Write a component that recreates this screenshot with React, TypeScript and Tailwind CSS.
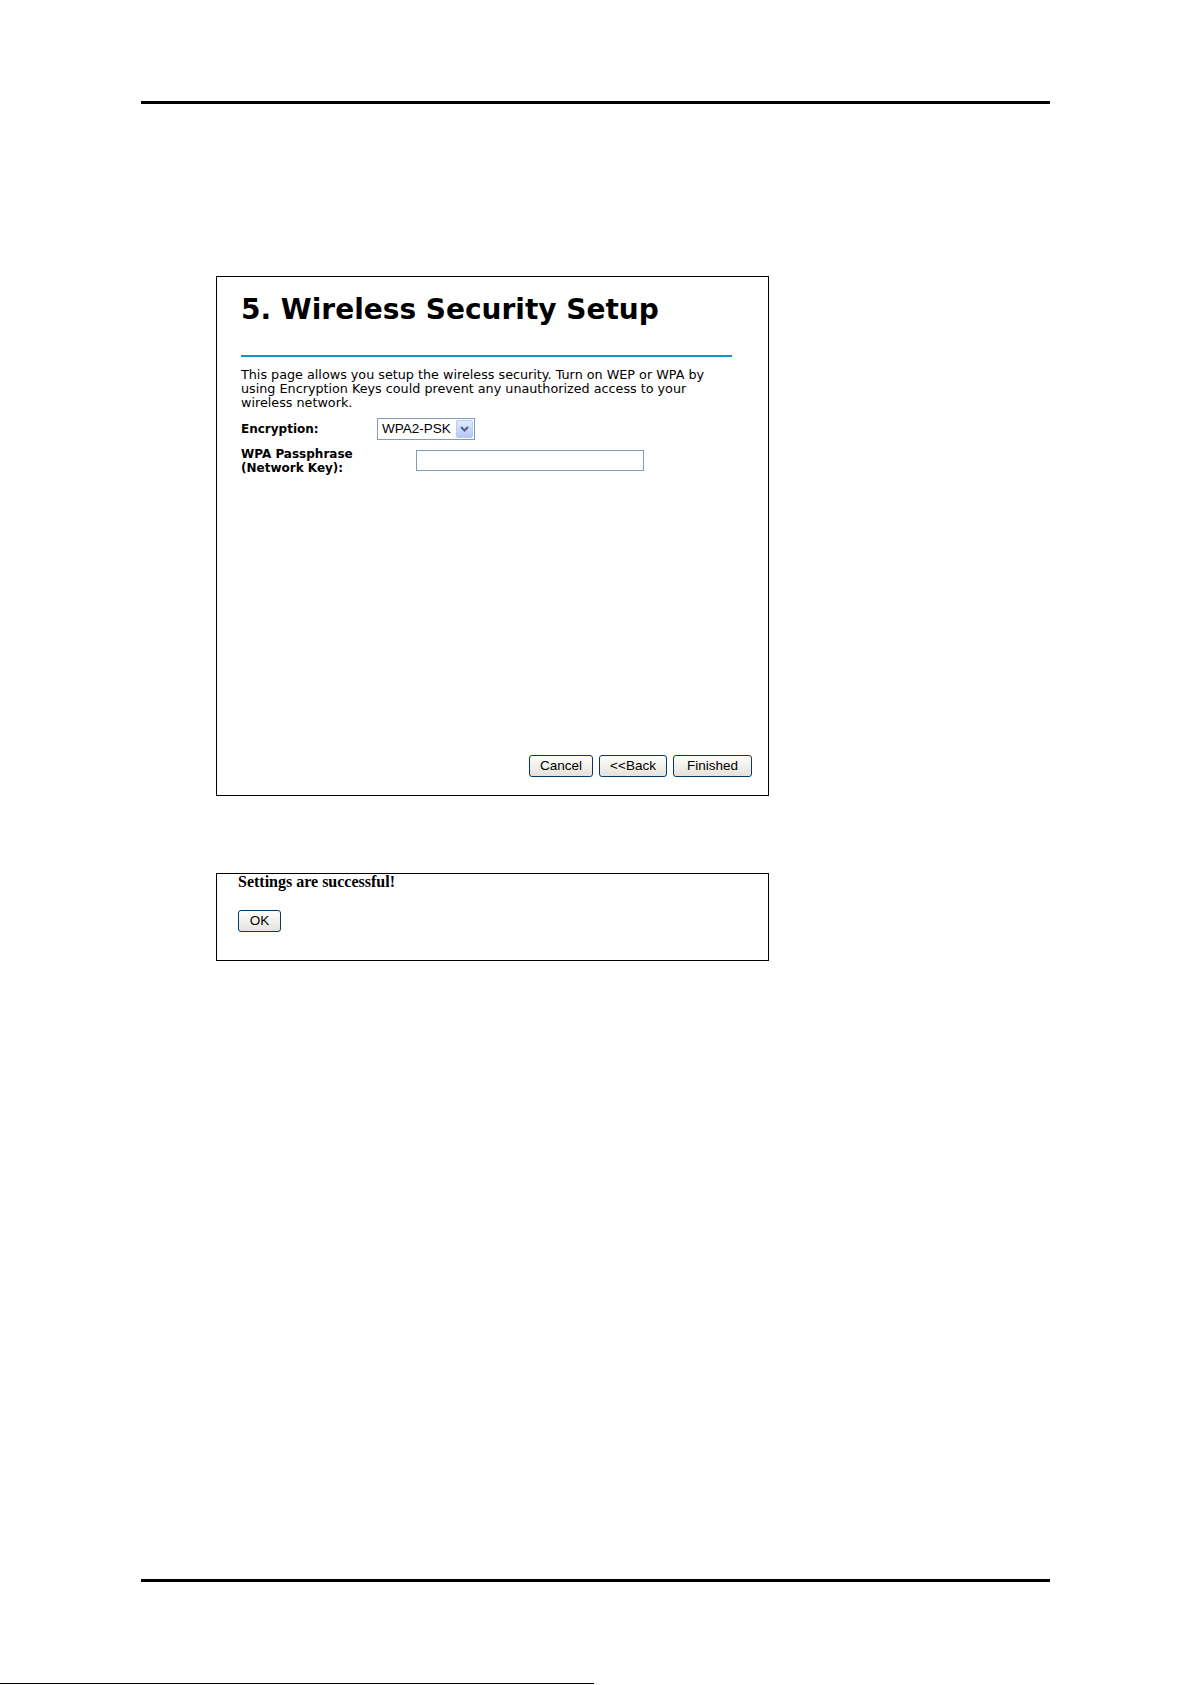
export default function App() {
  return (
    <div className="w-[1191px] h-[1685px] bg-white text-black font-['DejaVu_Sans',sans-serif]">
      {/* header rule */}
      <div className="pt-[101px] pl-[141px]">
        <div className="w-[909px] h-[3px] bg-black" />
      </div>

      {/* wizard panel */}
      <div className="ml-[216px] mt-[172px] w-[553px] h-[520px] border border-black flex flex-col">
        <div className="pl-[24px] pt-[16px]">
          <h1 className="text-[28px] leading-[34px] font-bold">5. Wireless Security Setup</h1>
          <div className="mt-[28px] w-[491px] h-[2px] bg-[#0d96cd]" />
          <p className="mt-[11px] text-[12.75px] leading-[14px]">
            This page allows you setup the wireless security. Turn on WEP or WPA by
            <br />
            using Encryption Keys could prevent any unauthorized access to your
            <br />
            wireless network.
          </p>

          <div className="mt-[8px] flex items-center">
            <span className="w-[136px] text-[12px] font-bold">Encryption:</span>
            <div className="w-[98px] h-[22px] border border-[#7f9db9] flex items-center justify-between pl-[4px] pr-[1px]">
              <span className="font-['Liberation_Sans',sans-serif] text-[13.5px] leading-none">WPA2-PSK</span>
              <span className="w-[17px] h-[18px] rounded-[2px] border border-[#b9c9ef] bg-gradient-to-b from-[#e1eafe] to-[#b4c8f6] flex items-center justify-center">
                <svg width="9" height="6" viewBox="0 0 9 6">
                  <path d="M1 1 L4.5 4.5 L8 1" fill="none" stroke="#4d6185" strokeWidth="2" />
                </svg>
              </span>
            </div>
          </div>

          <div className="mt-[7px] flex items-start">
            <span className="w-[175px] text-[12px] font-bold leading-[14px]">
              WPA Passphrase
              <br />
              (Network Key):
            </span>
            <div className="mt-[3px] w-[228px] h-[21px] border border-[#7f9db9] bg-white" />
          </div>
        </div>

        <div className="mt-auto flex justify-end gap-[6px] pr-[16px] pb-[18px] font-['Liberation_Sans',sans-serif] text-[13.5px]">
          <button className="w-[64px] h-[22px] rounded-[3px] border border-[#003c74] bg-gradient-to-b from-white to-[#e4e2d8] leading-none">Cancel</button>
          <button className="w-[68px] h-[22px] rounded-[3px] border border-[#003c74] bg-gradient-to-b from-white to-[#e4e2d8] leading-none">&lt;&lt;Back</button>
          <button className="w-[79px] h-[22px] rounded-[3px] border border-[#003c74] bg-gradient-to-b from-white to-[#e4e2d8] leading-none">Finished</button>
        </div>
      </div>

      {/* result panel */}
      <div className="ml-[216px] mt-[77px] w-[553px] h-[88px] border border-black pl-[21px]">
        <p className="font-['Liberation_Serif',serif] text-[16px] font-bold leading-[16px]">Settings are successful!</p>
        <button className="mt-[20px] w-[43px] h-[22px] rounded-[3px] border border-[#003c74] bg-gradient-to-b from-white to-[#e4e2d8] font-['Liberation_Sans',sans-serif] text-[13.5px] leading-none">
          OK
        </button>
      </div>

      {/* footer rule */}
      <div className="mt-[618px] pl-[141px]">
        <div className="w-[909px] h-[3px] bg-black" />
      </div>
      <div className="mt-[101px] w-[594px] h-px bg-black" />
    </div>
  );
}
